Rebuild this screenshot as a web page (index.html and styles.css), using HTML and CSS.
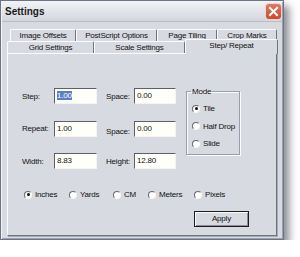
FILE: index.html
```html
<!DOCTYPE html>
<html lang="en">
<head>
  <meta charset="UTF-8">
  <title>Settings</title>
  <link rel="stylesheet" href="styles.css">
</head>
<body>
  <div class="window">
    <div class="titlebar">
      <span class="title">Settings</span>
      <span class="close">
        <svg width="15" height="15" viewBox="0 0 15 15">
          <path d="M4 4 L11 11 M11 4 L4 11" stroke="#fff" stroke-width="2" stroke-linecap="square"/>
        </svg>
      </span>
    </div>

    <div class="content">
      <div class="tab-row back">
        <div class="tab w1">Image Offsets</div>
        <div class="tab w2">PostScript Options</div>
        <div class="tab w3">Page Tiling</div>
        <div class="tab w4">Crop Marks</div>
      </div>
      <div class="tab-row front">
        <div class="tab w5">Grid Settings</div>
        <div class="tab w6">Scale Settings</div>
        <div class="tab w7 active">Step/ Repeat</div>
      </div>

      <div class="panel">
        <div class="top">
          <div class="fields">
            <label>Step:</label>
            <div class="input"><span class="sel">1.00</span></div>
            <label class="second">Space:</label>
            <div class="input">0.00</div>

            <label>Repeat:</label>
            <div class="input">1.00</div>
            <label class="second low">Space:</label>
            <div class="input">0.00</div>

            <label>Width:</label>
            <div class="input">8.83</div>
            <label class="second">Height:</label>
            <div class="input">12.80</div>
          </div>

          <fieldset class="mode">
            <legend>Mode</legend>
            <div class="radio"><span class="dot on"></span>Tile</div>
            <div class="radio"><span class="dot"></span>Half Drop</div>
            <div class="radio"><span class="dot"></span>Slide</div>
          </fieldset>
        </div>

        <div class="units">
          <div class="radio"><span class="dot on"></span>Inches</div>
          <div class="radio"><span class="dot"></span>Yards</div>
          <div class="radio"><span class="dot"></span>CM</div>
          <div class="radio"><span class="dot"></span>Meters</div>
          <div class="radio"><span class="dot"></span>Pixels</div>
        </div>

        <div class="actions">
          <div class="button">Apply</div>
        </div>
      </div>
    </div>
  </div>
</body>
</html>
```

FILE: styles.css
```css
body {
  margin: 0;
  background-color: #fff;
  font-family: 'Liberation Sans', Arial, sans-serif;
  font-size: 8px;
  letter-spacing: -0.2px;
  color: #111;
}

.window {
  width: 282px;
  height: 238px;
  border: 1px solid #6c7384;
  background-color: #d8dae1;
  box-shadow: inset 1px 1px 0 #f3f4f7, inset -1px -1px 0 #9ca1ae, 5px 6px 8px rgba(40, 45, 60, 0.55);
  display: flex;
  flex-direction: column;
}

.titlebar {
  height: 19px;
  margin: 1px 1px 0 1px;
  background: linear-gradient(#f1f2f5, #d3d6de);
  border-bottom: 1px solid #b9bdc8;
  display: flex;
  align-items: center;
  justify-content: space-between;
  padding: 0 1px 0 3px;
}

.title {
  font-size: 10px;
  font-weight: bold;
  letter-spacing: 0;
  color: #1a1a1a;
}

.close {
  width: 15px;
  height: 15px;
  border-radius: 3px;
  background: linear-gradient(#e07a63, #c74a32);
  box-shadow: 0 0 0 1px #f2d4cd;
  display: flex;
}

.content {
  flex: 1;
  padding: 7px 4px 3px 6px;
  display: flex;
  flex-direction: column;
}

.tab-row {
  display: flex;
  height: 12px;
}

.tab-row.back {
  padding-left: 3px;
}

.tab {
  height: 12px;
  line-height: 12px;
  text-align: center;
  border-top: 1px solid #fbfbfd;
  border-left: 1px solid #fbfbfd;
  border-right: 1px solid #6f7380;
  border-top-left-radius: 2px;
  border-top-right-radius: 2px;
  box-sizing: border-box;
  white-space: nowrap;
}

.w1 { width: 66px; }
.w2 { width: 81px; }
.w3 { width: 60px; }
.w4 { width: 60px; }
.w5 { width: 87px; }
.w6 { width: 91px; }
.w7 { width: 93px; }

.tab.active {
  height: 15px;
  margin-top: -2px;
  line-height: 11px;
  position: relative;
  z-index: 1;
  background-color: #d8dae1;
  margin-bottom: -1px;
}

.panel {
  flex: 1;
  border: 1px solid #fbfbfd;
  border-right-color: #6f7380;
  border-bottom-color: #6f7380;
  box-shadow: 1px 1px 0 #a7abb6;
  width: 270px;
  display: flex;
  flex-direction: column;
  padding: 33px 0 0 14px;
  box-sizing: border-box;
}

.top {
  display: flex;
  align-items: flex-start;
}

.fields {
  display: grid;
  grid-template-columns: 32px 43px 37px 42px;
  grid-auto-rows: 16px;
  row-gap: 16.5px;
  margin-top: 1px;
  align-items: center;
}

.fields label.second {
  padding-left: 9px;
}

.fields label.low {
  padding-top: 6px;
}

.input {
  height: 16px;
  box-sizing: border-box;
  border: 1px solid;
  border-color: #5c5f68 #f4f4f4 #f4f4f4 #5c5f68;
  background-color: #fffff9;
  padding-left: 2px;
  line-height: 13px;
}

.sel {
  background-color: #5b7fc4;
  color: #fff;
}

.mode {
  margin: 0 0 0 10px;
  padding: 4px 0 0 5px;
  width: 54px;
  height: 68px;
  box-sizing: border-box;
  border: 1px solid #9a9eaa;
  box-shadow: 1px 1px 0 #fbfbfd, inset 1px 1px 0 #fbfbfd;
}

.mode legend {
  padding: 0 1px;
  margin-left: -1px;
}

.mode .radio {
  height: 17.5px;
}

.radio {
  display: flex;
  align-items: center;
  white-space: nowrap;
}

.dot {
  width: 6px;
  height: 6px;
  border-radius: 50%;
  border: 1px solid;
  border-color: #666a74 #f6f6f8 #f6f6f8 #666a74;
  background-color: #fff;
  margin-right: 3px;
  display: flex;
  align-items: center;
  justify-content: center;
}

.dot.on::after {
  content: "";
  width: 3px;
  height: 3px;
  border-radius: 50%;
  background-color: #111;
}

.units {
  display: flex;
  margin-top: 21px;
  padding-left: 2px;
}

.units .radio:nth-child(1) { width: 45px; }
.units .radio:nth-child(2) { width: 44px; }
.units .radio:nth-child(3) { width: 35px; }
.units .radio:nth-child(4) { width: 46px; }

.actions {
  display: flex;
  justify-content: flex-end;
  margin-top: 12px;
  padding-right: 27px;
}

.button {
  width: 55px;
  height: 16px;
  box-sizing: border-box;
  border: 1px solid #1c1c1c;
  box-shadow: inset 1px 1px 0 #fbfbfd, inset -1px -1px 0 #8a8e98;
  text-align: center;
  line-height: 14px;
}
```
